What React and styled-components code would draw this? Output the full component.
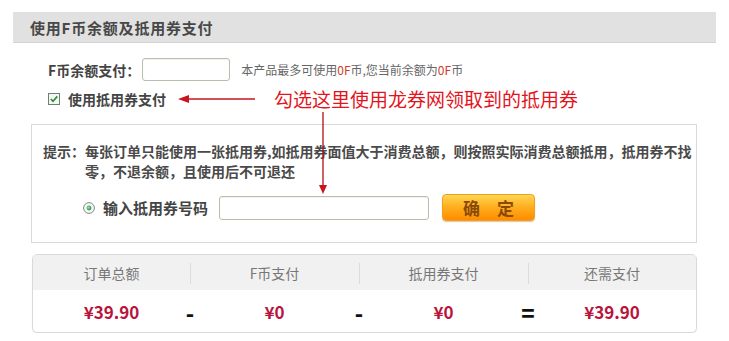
import React from 'react';
import styled, { createGlobalStyle } from 'styled-components';

const Global = createGlobalStyle`
  html, body { margin: 0; padding: 0; background: #fff; }
  body { font-family: "Noto Sans CJK SC", "Noto Sans", sans-serif; }
  * { box-sizing: border-box; }
`;

const Page = styled.div`
  position: relative;
  width: 729px;
  padding: 12px 13px 0;
`;

const TitleBar = styled.div`
  height: 31px;
  background: #e1e1e1;
  border-bottom: 1px solid #d3d3d3;
  display: flex;
  align-items: center;
  padding-left: 17px;
  font-size: 15px;
  font-weight: 700;
  color: #484848;
  letter-spacing: 0.8px;
`;

const Section = styled.div`
  display: flex;
  flex-direction: column;
  gap: 7px;
  padding-left: 35px;
  margin-top: 15px;
`;

const Row = styled.div`
  display: flex;
  align-items: center;
  height: ${p => p.$h || 22}px;
`;

const Label = styled.span`
  font-size: 14px;
  font-weight: 700;
  color: #444;
  margin-left: ${p => p.$ml || 0}px;
`;

const TextInput = styled.input`
  width: ${p => p.$w}px;
  height: ${p => p.$h}px;
  margin-left: ${p => p.$ml || 0}px;
  border: 1px solid #b6c0aa;
  border-radius: 3px;
  background: #fff;
  box-shadow: inset 0 1px 1px rgba(0,0,0,0.06);
  outline: none;
  padding: 0 4px;
`;

const Helper = styled.span`
  margin-left: 11px;
  font-size: 12px;
  color: #666;
`;

const Red = styled.span`
  color: #d23a2a;
`;

const Annotation = styled.span`
  margin-left: 18px;
  font-size: 19px;
  color: #e3141c;
  line-height: 22px;
`;

const ArrowSvg = styled.svg`
  margin-left: 12px;
  display: block;
`;

const DownArrow = styled.svg`
  position: absolute;
  left: 318px;
  top: 112px;
`;

const Box = styled.div`
  margin: 14px 0 0 18px;
  width: 666px;
  border: 1px solid #dadada;
  padding: 16px 0 21px 11px;
`;

const Hint = styled.div`
  display: flex;
  font-size: 14px;
  font-weight: 700;
  color: #4a4a4a;
  line-height: 20px;
`;

const HintLead = styled.span`
  flex: none;
  white-space: nowrap;
`;

const HintBody = styled.div`
  flex: none;
  width: 612px;
`;

const RadioRow = styled.div`
  display: flex;
  align-items: center;
  margin-top: 13px;
  padding-left: 40px;
  height: 27px;
`;

const RadioLabel = styled.span`
  margin-left: 8px;
  font-size: 15px;
  font-weight: 700;
  color: #444;
`;

const ConfirmButton = styled.button`
  margin-left: 13px;
  width: 93px;
  height: 27px;
  border: 1px solid #f0a020;
  border-radius: 4px;
  background: linear-gradient(to bottom, #ffd755 0%, #ffb020 45%, #ff8c00 100%);
  box-shadow: 0 1px 1px rgba(160, 90, 0, 0.35);
  color: #8a4a05;
  font-family: "Noto Sans CJK SC", sans-serif;
  font-size: 17px;
  font-weight: 700;
  padding: 0;
  line-height: 25px;
`;

const Table = styled.div`
  margin: 11px 0 0 19px;
  width: 665px;
  border: 1px solid #d9d9d9;
  border-radius: 5px;
  box-shadow: 0 1px 1px rgba(0,0,0,0.08);
  overflow: hidden;
`;

const HeadRow = styled.div`
  display: grid;
  grid-template-columns: 157px 169px 169px 1fr;
  height: 35px;
  background: #f1f1f1;
`;

const HeadCell = styled.div`
  position: relative;
  display: flex;
  align-items: center;
  justify-content: center;
  font-size: 14px;
  color: #777;
  ${p => p.$sep && `
    &::before {
      content: "";
      position: absolute;
      left: 0;
      top: 8px;
      bottom: 6px;
      width: 1px;
      background: #dcdcdc;
    }
  `}
`;

const ValueRow = styled.div`
  display: grid;
  grid-template-columns: 157px 0 169px 0 169px 0 1fr;
  height: 42px;
  align-items: center;
`;

const Value = styled.div`
  display: flex;
  justify-content: center;
  font-size: 17px;
  font-weight: 700;
  color: #b8143c;
`;

const Op = styled.div`
  display: flex;
  justify-content: center;
  width: 0;
  overflow: visible;
  font-size: 22px;
  font-weight: 900;
  color: #111;
  margin-top: 2px;
`;

const Check = () => (
  <svg width="12" height="12" viewBox="0 0 12 12">
    <rect x="0.5" y="0.5" width="11" height="11" fill="#f4f6f4" stroke="#6f7f76" />
    <path d="M2.8 6 L5 8.3 L9.3 3.4" fill="none" stroke="#2f8f2f" strokeWidth="1.6" />
  </svg>
);

const Radio = () => (
  <svg width="12" height="12" viewBox="0 0 12 12">
    <defs>
      <radialGradient id="rg" cx="0.4" cy="0.4" r="0.6">
        <stop offset="0" stopColor="#9fe09f" />
        <stop offset="1" stopColor="#2f8f3f" />
      </radialGradient>
    </defs>
    <circle cx="6" cy="6" r="5.4" fill="#f5f7f5" stroke="#7c8c86" strokeWidth="1" />
    <circle cx="6" cy="6" r="2.4" fill="url(#rg)" />
  </svg>
);

export default function App() {
  return (
    <>
      <Global />
      <Page>
        <TitleBar>使用F币余额及抵用券支付</TitleBar>
        <Section>
          <Row $h={23}>
            <Label>F币余额支付：</Label>
            <TextInput $w={88} $h={23} $ml={2} />
            <Helper>
              本产品最多可使用<Red>0F</Red>币,您当前余额为<Red>0F</Red>币
            </Helper>
          </Row>
          <Row $h={22}>
            <Check />
            <Label $ml={8}>使用抵用券支付</Label>
            <ArrowSvg width="78" height="10" viewBox="0 0 78 10">
              <path d="M0 5 L11 1 L11 9 Z" fill="#c8141c" />
              <line x1="10" y1="5" x2="77" y2="5" stroke="#c8141c" strokeWidth="1.3" />
            </ArrowSvg>
            <Annotation>勾选这里使用龙券网领取到的抵用券</Annotation>
          </Row>
        </Section>
        <DownArrow width="10" height="83" viewBox="0 0 10 83">
          <line x1="5" y1="0" x2="5" y2="74" stroke="#b01018" strokeWidth="1.3" />
          <path d="M1 73 L9 73 L5 82 Z" fill="#c8141c" />
        </DownArrow>
        <Box>
          <Hint>
            <HintLead>提示：</HintLead>
            <HintBody>
              每张订单只能使用一张抵用券,如抵用券面值大于消费总额，则按照实际消费总额抵用，抵用券不找零，不退余额，且使用后不可退还
            </HintBody>
          </Hint>
          <RadioRow>
            <Radio />
            <RadioLabel>输入抵用券号码</RadioLabel>
            <TextInput $w={210} $h={24} $ml={11} />
            <ConfirmButton>确　定</ConfirmButton>
          </RadioRow>
        </Box>
        <Table>
          <HeadRow>
            <HeadCell>订单总额</HeadCell>
            <HeadCell $sep>F币支付</HeadCell>
            <HeadCell $sep>抵用券支付</HeadCell>
            <HeadCell $sep>还需支付</HeadCell>
          </HeadRow>
          <ValueRow>
            <Value>¥39.90</Value>
            <Op>-</Op>
            <Value>¥0</Value>
            <Op>-</Op>
            <Value>¥0</Value>
            <Op>=</Op>
            <Value>¥39.90</Value>
          </ValueRow>
        </Table>
      </Page>
    </>
  );
}
